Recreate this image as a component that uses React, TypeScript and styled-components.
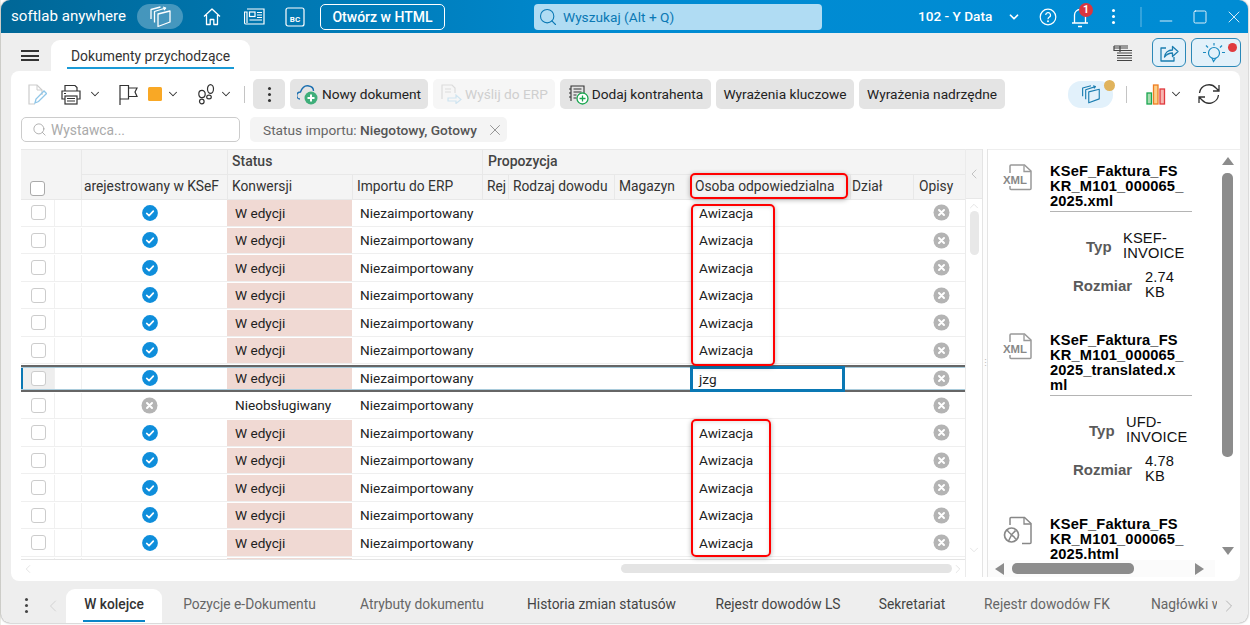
import React from "react";
import styled, { createGlobalStyle } from "styled-components";
import { ChevronDown, ChevronLeft, ChevronRight, ChevronUp, Search, X, Minus, Square } from "lucide-react";

const Global = createGlobalStyle`
  html, body { margin: 0; padding: 0; background: #fff; overflow: hidden; }
  #root { width: 1250px; height: 625px; }
  * { box-sizing: border-box; }
`;

const Desktop = styled.div`
  width: 1250px; height: 625px; background: linear-gradient(90deg, #d8d8cc 0, #fff 1px); position: relative; overflow: hidden;
`;
const Window = styled.div`
  width: 1247px; height: 623px; margin-left: 1px; background: #eeeeee; border-radius: 9px; overflow: hidden;
  display: flex; flex-direction: column; font-family: Roboto, "Liberation Sans", sans-serif; box-shadow: 0 0 2px #777; position: relative;
`;
const TitleBar = styled.header`
  height: 33px; flex: none; display: flex; align-items: center; color: #fff;
  background: linear-gradient(90deg, #006797 0, #0079b4 25%, #008bd2 50%, #008cd4 100%);
`;
const Brand = styled.div`font-size: 15.1px; margin: -2px 0 0 10px; width: 126px; white-space: nowrap;`;
const CubePill = styled.div`
  width: 46px; height: 25px; border-radius: 13px; background: rgba(255,255,255,.27); display: flex; align-items: center; justify-content: center;
`;
const TitleIcon = styled.div<{ $ml: number; $w: number }>`
  margin-left: ${p => p.$ml}px; width: ${p => p.$w}px; display: flex; justify-content: center; align-items: center; flex: none;
`;
const OpenButton = styled.button`
  margin-left: 15px; width: 125px; height: 26px; border: 1px solid #fff; border-radius: 5px; background: transparent; color: #fff; font: 500 14px Roboto, sans-serif; padding: 0; flex: none;
`;
const GlobalSearch = styled.div`
  margin-left: 89px; width: 288px; height: 26px; background: #b0dcf3; border-radius: 4px; display: flex; align-items: center; padding-left: 4px; gap: 5px; color: #0a78b4; font-size: 13.7px; flex: none;
`;
const CompanyName = styled.div`margin-left: 96px; width: 74px; font-size: 13.6px; font-weight: 500; white-space: nowrap; margin-top: -1px;`;
const BellWrap = styled.div`position: relative; margin-left: 13px; width: 20px; height: 22px; display: flex; justify-content: center;`;
const BellBadge = styled.span`
  position: absolute; left: 9px; top: -3px; width: 14px; height: 14px; border-radius: 50%; background: #d9363e; font: 700 10.5px/14px Roboto, sans-serif; text-align: center; color: #fff;
`;
const TitleSep = styled.div`margin-left: 25px; width: 2px; height: 20px; background: rgba(255,255,255,.2);`;

const TabStrip = styled.div`height: 38px; flex: none; display: flex; position: relative;`;
const Burger = styled.div`
  margin: 17px 0 0 20px; width: 18px; height: 11px; border-top: 2px solid #333; border-bottom: 2px solid #333; position: relative; flex: none;
  &::after { content: ""; position: absolute; left: 0; right: 0; top: 2.5px; height: 2px; background: #333; }
`;
const DocTab = styled.div`
  margin: 7px 0 0 12px; width: 199px; height: 31px; background: #fff; border-radius: 9px 9px 0 0; font-size: 13.9px; color: #333; display: flex; flex-direction: column; align-items: center; padding-top: 7px; flex: none;
  span { border-bottom: 2px solid #1a9ad6; padding: 0 4px 2px; line-height: 18px; white-space: nowrap; width: 167px; text-align: center; }
`;
const StripRight = styled.div`margin-left: auto; margin-right: 7px; display: flex; align-items: flex-start; padding-top: 5px;`;
const ShareButton = styled.div<{ $w: number; $ml: number }>`
  width: ${p => p.$w}px; margin-left: ${p => p.$ml}px; height: 29px; background: #e3f1fa; border: 1px solid #2a88b8; border-radius: 6px; display: flex; align-items: center; justify-content: center; position: relative;
`;
const RedDot = styled.span`position: absolute; right: 3px; top: 4px; width: 9px; height: 9px; background: #e03a3e; border-radius: 50%;`;

const Panel = styled.main`
  margin: 0 8px 0 10px; height: 510px; flex: none; background: #fff; border-radius: 8px; display: flex; flex-direction: column; padding: 8px 0 0 10px; overflow: hidden;
`;
const Toolbar = styled.div`height: 30px; display: flex; align-items: center; flex: none;`;
const ToolIcon = styled.div<{ $w: number; $ml?: number; $mt?: number }>`
  width: ${p => p.$w}px; margin-left: ${p => p.$ml ?? 0}px; margin-top: ${p => p.$mt ?? 0}px; flex: none; display: flex; justify-content: center; align-items: center; color: #333;
`;
const ToolSep = styled.div<{ $ml: number }>`width: 1px; height: 17px; background: #c4c4c4; margin-left: ${p => p.$ml}px; flex: none;`;
const ToolButton = styled.button<{ $w: number; $off?: boolean; $ml: number }>`
  width: ${p => p.$w}px; margin-left: ${p => p.$ml}px; height: 30px; border: 0; border-radius: 5px; padding: 0; flex: none;
  background: ${p => p.$off ? "#f6f6f6" : "#e4e4e4"}; color: ${p => p.$off ? "#cfcfcf" : "#222"};
  font: 400 13.7px Roboto, sans-serif; display: flex; align-items: center; justify-content: center; gap: 3px; white-space: nowrap;
`;
const StatsPill = styled.div`
  width: 45px; height: 27px; margin-left: 63px; background: #e2f1fb; border-radius: 13px; display: flex; align-items: center; justify-content: center; position: relative; flex: none;
`;
const AmberDot = styled.span`position: absolute; right: -2px; top: -1px; width: 11px; height: 11px; background: #e0b35c; border-radius: 50%;`;

const FilterRow = styled.div`height: 25px; margin-top: 8px; display: flex; flex: none;`;
const FilterInput = styled.div`
  width: 219px; height: 25px; border: 1px solid #ccc; border-radius: 5px; display: flex; align-items: center; padding-left: 10px; gap: 4px; color: #aaa; font-size: 13.8px;
`;
const FilterChip = styled.div`
  margin-left: 10px; width: 257px; height: 25px; background: #f4f4f4; border-radius: 5px; display: flex; align-items: center; padding-left: 13px; gap: 9px; font-size: 13.7px; color: #666; white-space: nowrap;
  b { font-weight: 500; color: #555; }
`;

const Workspace = styled.div`margin-top: 7px; display: flex; height: 432px; flex: none; position: relative;`;
const GridColumn = styled.section`width: 944px; flex: none; display: flex; flex-direction: column;`;
const cols = "33px 27px 146px 125px 130px 26px 106px 76px 160px 63px 52px";
const Header = styled.div`
  display: grid; grid-template-columns: ${cols}; grid-template-rows: 25px 25px; background: #f4f4f4; border-top: 1px solid #e8e8e8; height: 50px; flex: none; font-size: 13.8px; color: #333;
`;
const HCell = styled.div<{ $col: string; $row: string; $end?: boolean; $pl?: number; $group?: boolean; $bare?: boolean }>`
  grid-column: ${p => p.$col}; grid-row: ${p => p.$row}; border-left: ${p => p.$bare ? "0" : "1px solid #e8e8e8"}; border-bottom: 1px solid #e8e8e8; display: flex; align-items: center;
  padding-left: ${p => p.$pl ?? 4}px; padding-bottom: 2px; overflow: hidden; white-space: nowrap; justify-content: ${p => p.$end ? "flex-end" : "flex-start"}; ${p => p.$end ? "padding-right: 8px;" : ""}
  ${p => p.$group ? "font-weight: 500; color: #444; font-size: 14px;" : ""}
`;
const HeadCheck = styled.div`align-self: flex-end; width: 15px; height: 15px; margin: 0 0 1px 9px; border: 1px solid #aaa; border-radius: 3px; background: #fff;`;
const Rows = styled.div`height: 361px; overflow: hidden; flex: none; border-bottom: 1px solid #e4e4e4;`;
const Row = styled.div<{ $sel?: boolean }>`
  display: grid; grid-template-columns: ${cols}; height: 27.5px; font-size: 13.6px; color: #222; position: relative;
  ${p => p.$sel ? "" : "border-bottom: 1px solid #efefef; padding-top: 1px;"}
  ${p => p.$sel ? `&::after { content: ""; position: absolute; left: 0; right: 0; top: 1px; bottom: 0; border-top: 2px solid #666; border-bottom: 2px solid #666; box-shadow: inset 0 1px 0 #a9cbdb, inset 0 -1px 0 #a9cbdb; pointer-events: none; }` : ""}
`;
const SelCell = styled.div<{ $sel?: boolean }>`
  display: flex; align-items: center; justify-content: center; padding-left: 2px; ${p => p.$sel ? "background: #eee; border-left: 2px solid #0a78b4; margin: 3px 0 2px; padding-left: 0;" : ""}
  i { display: block; width: 15px; height: 15px; border: 1px solid #ccc; border-radius: 3px; background: #fff; }
`;
const PlainCell = styled.div<{ $tint?: boolean; $center?: boolean; $sel?: boolean; $rule?: boolean; $pr?: number; $pl?: number }>`
  display: flex; align-items: center; padding-left: ${p => p.$pl ?? (p.$center ? 0 : 8)}px; padding-right: ${p => p.$pr ?? 0}px; white-space: nowrap; overflow: hidden;
  justify-content: ${p => p.$center ? "center" : "flex-start"}; ${p => p.$rule ? "border-left: 1px solid #f0f0f0;" : ""}
  ${p => p.$tint ? "background: #f0d9d3;" : ""}
  ${p => p.$sel ? "margin: 3px 0 2px;" : ""}
`;
const EditCell = styled.div`
  border: 3px solid #0a78b4; margin: 2px 5px 0 0; display: flex; align-items: center; padding-left: 6px; background: #fff; z-index: 1;
`;
const HScroll = styled.div`height: 17px; position: relative; display: flex; align-items: center; justify-content: space-between; color: #ddd;`;
const HThumb = styled.div`position: absolute; left: 600px; width: 331px; top: 4px; height: 9px; border-radius: 5px; background: #e4e4e4;`;

const VGutter = styled.div`width: 17px; flex: none; display: flex; flex-direction: column; align-items: center; background: #fff; border-left: 1px solid #ebebeb; height: 428px;`;
const GutterHead = styled.div`width: 100%; height: 50px; background: #f4f4f4; border-top: 1px solid #e8e8e8; border-bottom: 1px solid #e8e8e8; display: flex; align-items: center; justify-content: center; color: #aaa; flex: none;`;
const VThumb = styled.div`width: 9px; height: 44px; background: #e8e8e8; border-radius: 5px; margin-top: -2px; flex: none;`;
const Splitter = styled.div`width: 6px; flex: none; border-left: 1px solid #e4e4e4; border-right: 1px solid #e4e4e4; height: 428px; display: flex; align-items: center; justify-content: center; color: #bbb; font-size: 9px; background: #fdfdfd;`;

const Files = styled.aside`flex: 1; display: flex; flex-direction: column; min-width: 0; height: 428px; border-top: 1px solid #eee; font-family: "Liberation Sans", Arial, sans-serif;`;
const FilesTop = styled.div`flex: 1; display: flex; min-height: 0;`;
const FilesScroll = styled.div`flex: 1; overflow: hidden; padding: 14px 0 0 15px; min-width: 0;`;
const FileEntry = styled.div`display: grid; grid-template-columns: 47px 142px;`;
const FileName = styled.div`
  font-weight: 700; font-size: 14.67px; line-height: 15px; letter-spacing: .15px; color: #000; border-bottom: 1px solid #b4b4b4; padding: 0 6px 2px 0; word-break: break-all;
`;
const FileIcon = styled.div`margin-top: -1px;`;
const Props = styled.div`display: flex; flex-direction: column; height: 121px; padding-top: 19px;`;
const PropRow = styled.div<{ $ml: number; $mt?: number }>`display: flex; align-items: center; margin-left: ${p => p.$ml}px; margin-top: ${p => p.$mt ?? 0}px;`;
const PropLabel = styled.div<{ $w: number }>`width: ${p => p.$w}px; font-weight: 700; font-size: 15px; color: #5a5a5a; flex: none;`;
const PropValue = styled.div`font-size: 14.67px; line-height: 15px; letter-spacing: .15px; color: #111; white-space: pre-line;`;
const VBar = styled.div`width: 25px; flex: none; display: flex; flex-direction: column; align-items: center; padding-top: 7px; background: #fff;`;
const VBarThumb = styled.div`width: 11px; height: 284px; background: #8c8c8c; border-radius: 5px; margin-top: 8px;`;
const ArrowShape = styled.div<{ $dir: "up" | "down" | "left" | "right" }>`
  width: 0; height: 0; flex: none;
  ${p => p.$dir === "up" ? "border-left: 6px solid transparent; border-right: 6px solid transparent; border-bottom: 8px solid #8c8c8c;" : ""}
  ${p => p.$dir === "down" ? "border-left: 6px solid transparent; border-right: 6px solid transparent; border-top: 8px solid #8c8c8c; margin-bottom: 5px;" : ""}
  ${p => p.$dir === "left" ? "border-top: 6px solid transparent; border-bottom: 6px solid transparent; border-right: 9px solid #8c8c8c;" : ""}
  ${p => p.$dir === "right" ? "border-top: 6px solid transparent; border-bottom: 6px solid transparent; border-left: 9px solid #8c8c8c;" : ""}
`;
const HBar = styled.div`height: 17px; flex: none; display: flex; align-items: center; padding-left: 7px; background: #fbfbfb; margin-right: 25px;`;
const HBarThumb = styled.div`width: 122px; height: 11px; background: #8c8c8c; border-radius: 5px; margin: 0 61px 0 8px;`;

const Mark = styled.div<{ $x: number; $y: number; $w: number; $h: number }>`
  position: absolute; left: ${p => p.$x}px; top: ${p => p.$y}px; width: ${p => p.$w}px; height: ${p => p.$h}px;
  border: 2px solid #f00; border-radius: 5px; box-shadow: 0 1px 5px rgba(0,0,0,.3), inset 0 1px 4px rgba(0,0,0,.12); pointer-events: none; z-index: 3;
`;

const BottomTabs = styled.nav`height: 41px; flex: 1; display: flex; align-items: flex-end; position: relative; font-size: 13.8px; overflow: hidden;`;
const BottomTab = styled.div<{ $active?: boolean; $w: number; $ml: number; $dark?: boolean }>`
  width: ${p => p.$w}px; margin-left: ${p => p.$ml}px; height: 34px; flex: none; text-align: center; padding-top: 6px; white-space: nowrap;
  color: ${p => p.$active ? "#333" : p.$dark ? "#444" : "#666"}; font-weight: ${p => p.$active ? 500 : 400}; position: relative; line-height: 18px;
  ${p => p.$active ? "background: #fff; border-radius: 9px 9px 0 0;" : ""}
  u { position: absolute; left: 17px; right: 17px; bottom: 1px; height: 2px; background: #0a86c8; }
`;
const ClippedTab = styled(BottomTab)`overflow: hidden; text-align: left;`;
const Dots = styled.div<{ $c: string; $ml?: number; $mb?: number }>`
  width: 3px; flex: none; height: 3px; border-radius: 50%; background: ${p => p.$c}; box-shadow: 0 -6px 0 ${p => p.$c}, 0 6px 0 ${p => p.$c}; margin-left: ${p => p.$ml ?? 0}px; margin-bottom: ${p => p.$mb ?? 0}px;
`;
const BottomIcon = styled.div<{ $ml: number; $w: number; $c: string }>`
  margin-left: ${p => p.$ml}px; width: ${p => p.$w}px; flex: none; height: 34px; display: flex; align-items: center; justify-content: center; color: ${p => p.$c};
`;
const Spacer = styled.div`flex: 1;`;

const Cube = ({ c, s = 24 }: { c: string; s?: number }) => (
  <svg width={s} height={s} viewBox="0 0 24 24" fill="none" stroke={c} strokeWidth="1.3" strokeLinejoin="round">
    <path d="M10 9l12-3v11L10 21.5z" />
    <path d="M6.500 17.500V6.500l11-3.500" />
    <path d="M3 14V4.500L12.500 2" />
    <path d="M15 2l2.600 1-1.700 2" />
  </svg>
);
const Check = () => (
  <svg width="16" height="16" viewBox="0 0 17 17"><circle cx="8.500" cy="8.500" r="8.400" fill="#0f8edb" /><path d="M5 9l2.500 2.200L12 6.600" fill="none" stroke="#fff" strokeWidth="1.800" strokeLinecap="round" strokeLinejoin="round" /></svg>
);
const Cross = () => (
  <svg width="17" height="17" viewBox="0 0 17 17"><circle cx="8.500" cy="8.500" r="8" fill="#b4b4b4" /><path d="M6 6l5 5M11 6l-5 5" fill="none" stroke="#fff" strokeWidth="2" strokeLinecap="round" /></svg>
);
const XmlIcon = () => (
  <svg width="30" height="30" viewBox="0 0 30 30" fill="none">
    <path d="M7 10V3q0-1 1-1h13.500l6.500 6v17.500q0 1-1 1H8q-1 0-1-1V23" stroke="#999" strokeWidth="1.500" />
    <path d="M21 2.500v6h7" stroke="#999" strokeWidth="1.300" />
    <rect x="0" y="11" width="26" height="11" fill="#fff" />
    <text x="0" y="21" fontFamily="'Liberation Sans', sans-serif" fontSize="11" fontWeight="700" fill="#888" textLength="24" lengthAdjust="spacingAndGlyphs">XML</text>
  </svg>
);
const HtmlIcon = () => (
  <svg width="30" height="30" viewBox="0 0 30 30" fill="none" stroke="#888">
    <path d="M7 9V2.500q0-1 1-1h13.500l6.500 6v19q0 1-1 1H19" strokeWidth="1.500" />
    <path d="M21 2v6h7" strokeWidth="1.300" />
    <circle cx="8.500" cy="19" r="7" strokeWidth="1.700" />
    <path d="M4 13.500c1 3 3 3 4.500 5.500 1.500-2 3-3 4-4.500M8.500 19l-3 6M8.500 19c2 1 3.500 2.500 4.500 4.500" strokeWidth="1.500" />
  </svg>
);

const rows = Array.from({ length: 13 }, (_, i) => i);
const Titles = ["KSeF_Faktura_FSKR_M101_000065_2025.xml", "KSeF_Faktura_FSKR_M101_000065_2025_translated.xml"];

export default function App() {
  return (
    <Desktop>
      <Global />
      <Window>
        <TitleBar>
          <Brand>softlab anywhere</Brand>
          <CubePill><Cube c="#fff" /></CubePill>
          <TitleIcon $ml={20} $w={18}>
            <svg width="18" height="19" viewBox="0 0 18 19" fill="none" stroke="#fff" strokeWidth="1.3" strokeLinejoin="round"><path d="M1 9.500L9 2l8 7.500M3.500 8v9.500h3.700v-5h3.600v5h3.700V8" /></svg>
          </TitleIcon>
          <TitleIcon $ml={22} $w={22}>
            <svg width="21" height="17" viewBox="0 0 21 17" fill="none" stroke="#fff" strokeWidth="1.2"><path d="M3 1h17v15H2q-1.500 0-1.500-1.500V4H3v11" /><rect x="5.500" y="4" width="5.500" height="4.500" /><path d="M13 4.500h5M13 7h5M13 9.500h5M5.500 12h12.500" /></svg>
          </TitleIcon>
          <TitleIcon $ml={20} $w={20}>
            <svg width="20" height="20" viewBox="0 0 20 20" fill="none"><rect x="1" y="1" width="18" height="18" rx="2" stroke="#fff" strokeWidth="1.2" /><text x="10" y="15" textAnchor="middle" fontFamily="Roboto, sans-serif" fontSize="8" fontWeight="700" fill="#fff">BC</text></svg>
          </TitleIcon>
          <OpenButton>Otwórz w HTML</OpenButton>
          <GlobalSearch><Search size={20} strokeWidth={1.3} />Wyszukaj (Alt + Q)</GlobalSearch>
          <CompanyName>102 - Y Data</CompanyName>
          <TitleIcon $ml={15} $w={14}><ChevronDown size={14} strokeWidth={3} /></TitleIcon>
          <TitleIcon $ml={18} $w={18}>
            <svg width="18" height="18" viewBox="0 0 18 18" fill="none" stroke="#fff" strokeWidth="1.2"><circle cx="9" cy="9" r="7.800" /><path d="M6.700 7a2.400 2.400 0 1 1 3.400 2.200C9.300 9.700 9 10 9 11.200" /><circle cx="9" cy="13.300" r=".4" fill="#fff" /></svg>
          </TitleIcon>
          <BellWrap>
            <svg width="18" height="22" viewBox="0 0 18 22" fill="none" stroke="#fff" strokeWidth="1.3"><path d="M1 17h16M3.500 17V9a5.500 5.500 0 0 1 11 0v8M7 20.500h4" /></svg>
            <BellBadge>1</BellBadge>
          </BellWrap>
          <Dots $c="#fff" $ml={22} />
          <TitleSep />
          <TitleIcon $ml={14} $w={20}><Minus size={20} strokeWidth={1} style={{ marginTop: 8 }} /></TitleIcon>
          <TitleIcon $ml={16} $w={16}><Square size={16} strokeWidth={1.300} /></TitleIcon>
          <TitleIcon $ml={16} $w={20}><X size={20} strokeWidth={1} /></TitleIcon>
        </TitleBar>

        <TabStrip>
          <Burger />
          <DocTab><span>Dokumenty przychodzące</span></DocTab>
          <StripRight>
            <ToolIcon $w={20} $mt={7}>
              <svg width="20" height="17" viewBox="0 0 20 17" fill="none" stroke="#444"><path d="M1 1h14M1 1v5M1 3h14M7 1v6M1 5.500h18M4 8h15M4 10.500h15M4 13h15M4 15.500h15" strokeWidth="1.200" /></svg>
            </ToolIcon>
            <ShareButton $w={34} $ml={19}>
              <svg width="20" height="20" viewBox="0 0 20 20" fill="none" stroke="#1b7db0" strokeWidth="1.300" strokeLinejoin="round"><path d="M7 5H2v13h13v-4" /><path d="M5.500 14c.5-4 3.500-7 8-7V3.500L19 8.500l-5.500 5V10c-3.500 0-6 1.500-8 4z" /></svg>
            </ShareButton>
            <ShareButton $w={50} $ml={5}>
              <svg width="26" height="22" viewBox="0 0 26 22" fill="none" stroke="#1b8ac0" strokeWidth="1.200" style={{ marginRight: 4 }}><circle cx="13" cy="11" r="5.500" /><path d="M11 16l1.500 3.500L15 16M13 1v2.500M5 3.500l2 2M21 3.500l-2 2M2 10.500h3M21 10.500h3" /></svg>
              <RedDot />
            </ShareButton>
          </StripRight>
        </TabStrip>

        <Panel>
          <Toolbar>
            <ToolIcon $w={20} $ml={6}>
              <svg width="20" height="21" viewBox="0 0 20 21" fill="none"><path d="M8 20H2V1h8l5 5v5" stroke="#ccc" strokeWidth="1.200" /><path d="M10 1v5h5" stroke="#ccc" /><path d="M8 19l1-4 8-8 2.500 2.500-8 8z" stroke="#8fc6e8" strokeWidth="1.300" /></svg>
            </ToolIcon>
            <ToolIcon $w={20} $ml={14}>
              <svg width="20" height="21" viewBox="0 0 20 21" fill="none" stroke="#333" strokeWidth="1.200"><path d="M4 7V1.500h10L16 3.500V7M4 15H1V7h18v8h-3" /><rect x="4" y="12" width="12" height="8" /><path d="M6 14.500h8M6 17h8M3 9.500h2" /></svg>
            </ToolIcon>
            <ToolIcon $w={14} $ml={7}><ChevronDown size={14} strokeWidth={1.800} /></ToolIcon>
            <ToolIcon $w={19} $ml={17}>
              <svg width="19" height="21" viewBox="0 0 19 21" fill="none" stroke="#333" strokeWidth="1.200"><path d="M1 21V1.500h8.500V4h8.500l-2 4 2 4.500H9.500V15H1M9.500 4v8.500" /></svg>
            </ToolIcon>
            <ToolIcon $w={14} $ml={10}><svg width="14" height="14" viewBox="0 0 14 14"><rect width="14" height="14" rx="1.500" fill="#f9a825" /></svg></ToolIcon>
            <ToolIcon $w={14} $ml={4}><ChevronDown size={14} strokeWidth={1.800} /></ToolIcon>
            <ToolIcon $w={20} $ml={17}>
              <svg width="18" height="21" viewBox="0 0 18 21" fill="none" stroke="#333" strokeWidth="1.200"><ellipse cx="4" cy="10" rx="3.200" ry="3.600" /><ellipse cx="3.800" cy="17.500" rx="2.300" ry="2.300" /><ellipse cx="12.500" cy="5" rx="3" ry="4.300" /><ellipse cx="11" cy="13" rx="2.300" ry="1.900" /></svg>
            </ToolIcon>
            <ToolIcon $w={14} $ml={2}><ChevronDown size={14} strokeWidth={1.800} /></ToolIcon>
            <ToolSep $ml={11} />
            <ToolButton $w={32} $ml={8}><Dots $c="#333" /></ToolButton>
            <ToolButton $w={138} $ml={5}>
              <svg width="22" height="22" viewBox="0 0 22 22" fill="none"><path d="M3 16a3.500 3.500 0 0 1 .5-7C5 5 8 2 12 3c3 .5 4.500 3 4.500 5" stroke="#1b6fb0" strokeWidth="1.400" /><circle cx="14" cy="15" r="6.500" fill="#3fae7a" /><path d="M14 11.500v7M10.500 15h7" stroke="#fff" strokeWidth="2" /></svg>
              Nowy dokument
            </ToolButton>
            <ToolButton $w={122} $ml={5} $off>
              <svg width="22" height="20" viewBox="0 0 22 20" fill="none" stroke="#dcdcdc" strokeWidth="1.200"><path d="M2 15V1h10l3 3v5M5 5h6M5 8h6" /><path d="M8 14h8v-3l5 4.500-5 4V17H8z" stroke="#cfe4f0" /></svg>
              Wyślij do ERP
            </ToolButton>
            <ToolButton $w={151} $ml={5}>
              <svg width="21" height="21" viewBox="0 0 21 21" fill="none" stroke="#333" strokeWidth="1.100"><path d="M3 17V2h13v7M5.500 5h8M5.500 8h8M5.500 11h3M5.500 14h3M1 5h2M1 9h2M1 13h2" /><circle cx="14.500" cy="14.500" r="5.500" fill="#fff" stroke="#1aa650" strokeWidth="1.300" /><path d="M14.500 11.500v6M11.500 14.500h6" stroke="#1aa650" strokeWidth="1.300" /></svg>
              Dodaj kontrahenta
            </ToolButton>
            <ToolButton $w={138} $ml={5}>Wyrażenia kluczowe</ToolButton>
            <ToolButton $w={146} $ml={5}>Wyrażenia nadrzędne</ToolButton>
            <StatsPill><Cube c="#1b7db0" s={21} /><AmberDot /></StatsPill>
            <ToolSep $ml={13} />
            <ToolIcon $w={20} $ml={19}>
              <svg width="20" height="21" viewBox="0 0 20 21" fill="none" strokeWidth="1.300"><rect x="1" y="9" width="4.500" height="11" fill="#a8dcb0" stroke="#1aa650" /><rect x="7.500" y="1" width="4.500" height="19" fill="#fbd08a" stroke="#ef7d22" /><rect x="14" y="5" width="4.500" height="15" fill="#f6b6b0" stroke="#e0393e" /></svg>
            </ToolIcon>
            <ToolIcon $w={14} $ml={3}><ChevronDown size={14} strokeWidth={1.800} /></ToolIcon>
            <ToolIcon $w={22} $ml={15}>
              <svg width="22" height="22" viewBox="0 0 22 22" fill="none" stroke="#333" strokeWidth="1.300"><path d="M1.500 10A9.500 9.500 0 0 1 18 5l3 3M21 2v6h-6M20.500 12A9.500 9.500 0 0 1 4 17l-3-3M1 20v-6h6" /></svg>
            </ToolIcon>
          </Toolbar>

          <FilterRow>
            <FilterInput><Search size={15} strokeWidth={1.200} color="#999" />Wystawca...</FilterInput>
            <FilterChip><span>Status importu: <b>Niegotowy, Gotowy</b></span><X size={18} strokeWidth={1} color="#777" /></FilterChip>
          </FilterRow>

          <Workspace>
            <GridColumn>
              <Header>
                <HCell $col="1 / 3" $row="1 / 3" $pl={0} $bare><HeadCheck /></HCell>
                <HCell $col="3" $row="1" />
                <HCell $col="4 / 6" $row="1" $group>Status</HCell>
                <HCell $col="6 / 12" $row="1" $pl={5} $group>Propozycja</HCell>
                <HCell $col="3" $row="2" $end>arejestrowany w KSeF</HCell>
                <HCell $col="4" $row="2">Konwersji</HCell>
                <HCell $col="5" $row="2">Importu do ERP</HCell>
                <HCell $col="6" $row="2">Rej</HCell>
                <HCell $col="7" $row="2">Rodzaj dowodu</HCell>
                <HCell $col="8" $row="2">Magazyn</HCell>
                <HCell $col="9" $row="2" $pl={4}>Osoba odpowiedzialna</HCell>
                <HCell $col="10" $row="2" $pl={1}>Dział</HCell>
                <HCell $col="11" $row="2" $pl={5}>Opisy</HCell>
              </Header>
              <Rows>
                {rows.map(i => {
                  const sel = i === 6;
                  const off = i === 7;
                  return (
                    <Row key={i} $sel={sel}>
                      <SelCell $sel={sel}><i /></SelCell>
                      <PlainCell $sel={sel} $rule />
                      <PlainCell $sel={sel} $rule $center $pr={10}>{off ? <Cross /> : <Check />}</PlainCell>
                      <PlainCell $sel={sel} $tint={!off}>{off ? "Nieobsługiwany" : "W edycji"}</PlainCell>
                      <PlainCell $sel={sel}>Niezaimportowany</PlainCell>
                      <PlainCell $sel={sel} />
                      <PlainCell $sel={sel} />
                      <PlainCell $sel={sel} />
                      {sel ? <EditCell>jzg</EditCell> : <PlainCell $pl={9}>{off ? "" : "Awizacja"}</PlainCell>}
                      <PlainCell $sel={sel} />
                      <PlainCell $sel={sel} $center $pl={4}><Cross /></PlainCell>
                    </Row>
                  );
                })}
                <Row>
                  <SelCell />
                  <PlainCell $rule />
                  <PlainCell $rule />
                  <PlainCell $tint />
                </Row>
              </Rows>
              <HScroll><ChevronLeft size={14} strokeWidth={1.300} /><HThumb /><ChevronRight size={14} strokeWidth={1.300} /></HScroll>
            </GridColumn>

            <VGutter>
              <GutterHead><ChevronLeft size={30} strokeWidth={1} /></GutterHead>
              <ChevronUp size={14} color="#ddd" strokeWidth={1.300} />
              <VThumb />
              <Spacer />
              <ChevronDown size={14} color="#ddd" strokeWidth={1.300} style={{ marginBottom: 20 }} />
            </VGutter>
            <Splitter>⋮</Splitter>

            <Files>
              <FilesTop>
                <FilesScroll>
                  <FileEntry>
                    <FileIcon><XmlIcon /></FileIcon>
                    <FileName>{Titles[0]}</FileName>
                  </FileEntry>
                  <Props>
                    <PropRow $ml={83}><PropLabel $w={37}>Typ</PropLabel><PropValue>{"KSEF-\nINVOICE"}</PropValue></PropRow>
                    <PropRow $ml={70} $mt={9}><PropLabel $w={72}>Rozmiar</PropLabel><PropValue>{"2.74\nKB"}</PropValue></PropRow>
                  </Props>
                  <FileEntry>
                    <FileIcon><XmlIcon /></FileIcon>
                    <FileName>{Titles[1]}</FileName>
                  </FileEntry>
                  <Props>
                    <PropRow $ml={86}><PropLabel $w={37}>Typ</PropLabel><PropValue>{"UFD-\nINVOICE"}</PropValue></PropRow>
                    <PropRow $ml={70} $mt={9}><PropLabel $w={72}>Rozmiar</PropLabel><PropValue>{"4.78\nKB"}</PropValue></PropRow>
                  </Props>
                  <FileEntry>
                    <FileIcon><HtmlIcon /></FileIcon>
                    <FileName>KSeF_Faktura_FSKR_M101_000065_2025.html</FileName>
                  </FileEntry>
                </FilesScroll>
                <VBar>
                  <ArrowShape $dir="up" />
                  <VBarThumb />
                  <Spacer />
                  <ArrowShape $dir="down" />
                </VBar>
              </FilesTop>
              <HBar><ArrowShape $dir="left" /><HBarThumb /><ArrowShape $dir="right" /></HBar>
            </Files>

            <Mark $x={669} $y={24} $w={158} $h={26} />
            <Mark $x={670} $y={55} $w={84} $h={162} />
            <Mark $x={670} $y={270} $w={80} $h={138} />
          </Workspace>
        </Panel>

        <BottomTabs>
          <Dots $c="#444" $ml={24} $mb={16} />
          <BottomIcon $ml={15} $w={20} $c="#ccc"><ChevronLeft size={24} strokeWidth={1} /></BottomIcon>
          <BottomTab $active $w={96} $ml={3}>W kolejce<u /></BottomTab>
          <BottomTab $w={135} $ml={20}>Pozycje e-Dokumentu</BottomTab>
          <BottomTab $w={126} $ml={42}>Atrybuty dokumentu</BottomTab>
          <BottomTab $w={153} $ml={40} $dark>Historia zmian statusów</BottomTab>
          <BottomTab $w={128} $ml={36} $dark>Rejestr dowodów LS</BottomTab>
          <BottomTab $w={70} $ml={35} $dark>Sekretariat</BottomTab>
          <BottomTab $w={130} $ml={35}>Rejestr dowodów FK</BottomTab>
          <ClippedTab $w={66} $ml={39}>Nagłówki w</ClippedTab>
          <BottomIcon $ml={2} $w={20} $c="#aaa"><ChevronRight size={22} strokeWidth={1} /></BottomIcon>
        </BottomTabs>
      </Window>
    </Desktop>
  );
}
